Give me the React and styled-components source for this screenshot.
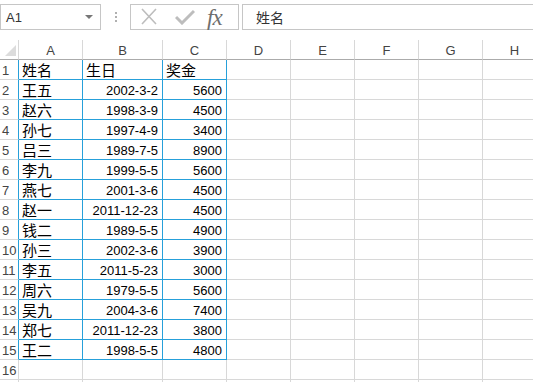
import React from 'react'
import styled, { createGlobalStyle } from 'styled-components'

const GlobalStyle = createGlobalStyle`
  html, body {
    margin: 0;
    padding: 0;
    background: #fff;
    overflow: hidden;
  }
  body {
    font-family: "Liberation Sans", Arial, sans-serif;
  }
`

const BLUE = '#26a0da'
const GRID = '#d8d8d8'

const columns = ['A', 'B', 'C', 'D', 'E', 'F', 'G', 'H']
const widths = [64, 80, 64, 64, 64, 64, 64, 64]

const data = [
  ['姓名', '生日', '奖金'],
  ['王五', '2002-3-2', '5600'],
  ['赵六', '1998-3-9', '4500'],
  ['孙七', '1997-4-9', '3400'],
  ['吕三', '1989-7-5', '8900'],
  ['李九', '1999-5-5', '5600'],
  ['燕七', '2001-3-6', '4500'],
  ['赵一', '2011-12-23', '4500'],
  ['钱二', '1989-5-5', '4900'],
  ['孙三', '2002-3-6', '3900'],
  ['李五', '2011-5-23', '3000'],
  ['周六', '1979-5-5', '5600'],
  ['吴九', '2004-3-6', '7400'],
  ['郑七', '2011-12-23', '3800'],
  ['王二', '1998-5-5', '4800'],
  ['', '', ''],
  ['', '', ''],
]

const Page = styled.div`
  width: 533px;
  height: 382px;
  overflow: hidden;
`

const Toolbar = styled.div`
  display: flex;
  align-items: flex-start;
  height: 40px;
  padding-top: 4px;
  box-sizing: border-box;
`

const NameBox = styled.div`
  width: 101px;
  height: 26px;
  box-sizing: border-box;
  border: 1px solid #c6c6c6;
  display: flex;
  align-items: center;
  justify-content: space-between;
  padding: 0 7px 0 5px;
  font-size: 13px;
  color: #333;
`

const Caret = styled.span`
  width: 0;
  height: 0;
  border-left: 4px solid transparent;
  border-right: 4px solid transparent;
  border-top: 4px solid #777;
`

const Dots = styled.div`
  width: 29px;
  height: 26px;
  display: flex;
  flex-direction: column;
  align-items: center;
  justify-content: center;
  gap: 2px;
  span {
    width: 2px;
    height: 2px;
    background: #b0b0b0;
  }
`

const FxGroup = styled.div`
  width: 109px;
  height: 26px;
  box-sizing: border-box;
  border: 1px solid #c6c6c6;
  display: flex;
  align-items: center;
  padding-left: 9px;
  gap: 17px;
`

const FxText = styled.span`
  font-family: "Liberation Serif", "Times New Roman", serif;
  font-style: italic;
  font-size: 23px;
  color: #6e6e6e;
  margin-left: -5px;
  line-height: 1;
  letter-spacing: -1px;
`

const FormulaInput = styled.div`
  flex: 1;
  margin-left: 3px;
  height: 26px;
  box-sizing: border-box;
  border: 1px solid #c6c6c6;
  border-right: none;
  display: flex;
  align-items: center;
  padding-left: 13px;
  font-family: "Noto Sans CJK SC", sans-serif;
  font-size: 14px;
  color: #333;
`

const Grid = styled.div`
  display: grid;
  grid-template-columns: 19px ${widths.map(w => w + 'px').join(' ')};
  grid-auto-rows: 20px;
  width: max-content;
`

const Corner = styled.div`
  position: relative;
  border-right: 1px solid ${GRID};
  border-bottom: 1px solid #ababab;
  &::after {
    content: '';
    position: absolute;
    right: 2px;
    bottom: 3px;
    width: 0;
    height: 0;
    border-left: 11px solid transparent;
    border-bottom: 11px solid #dcdcdc;
  }
`

const ColHead = styled.div`
  border-right: 1px solid ${GRID};
  border-bottom: 1px solid #ababab;
  display: flex;
  align-items: center;
  justify-content: center;
  font-size: 13px;
  color: #444;
  padding-top: 1px;
`

const RowHead = styled.div`
  border-right: 1px solid ${p => (p.$table ? BLUE : GRID)};
  border-bottom: 1px solid ${GRID};
  font-size: 13px;
  color: #444;
  padding-left: 2px;
  display: flex;
  align-items: center;
  padding-top: 1px;
`

const Cell = styled.div`
  border-right: 1px solid ${p => (p.$table ? BLUE : GRID)};
  border-bottom: 1px solid ${p => (p.$table ? BLUE : GRID)};
  display: flex;
  align-items: center;
  justify-content: ${p => (p.$num ? 'flex-end' : 'flex-start')};
  padding: 0 4px 0 3px;
  font-family: ${p => (p.$num ? '"Liberation Sans", Arial, sans-serif' : '"Noto Sans CJK SC", sans-serif')};
  font-size: ${p => (p.$num ? '13px' : '15px')};
  color: #000;
  white-space: nowrap;
  overflow: hidden;
  padding-top: ${p => (p.$num ? '2px' : '0')};
`

const EmptyCell = styled.div`
  border-right: 1px solid ${GRID};
  border-bottom: 1px solid ${GRID};
`

export default function App() {
  return (
    <Page>
      <GlobalStyle />
      <Toolbar>
        <NameBox>
          A1
          <Caret />
        </NameBox>
        <Dots>
          <span />
          <span />
          <span />
        </Dots>
        <FxGroup>
          <svg width="18" height="18" viewBox="0 0 18 18">
            <path d="M2 1 L16 16 M16 1 L2 16" stroke="#bdbdbd" strokeWidth="1.6" fill="none" />
          </svg>
          <svg width="20" height="16" viewBox="0 0 20 16">
            <path d="M1 8 L7 14 L19 2" stroke="#bdbdbd" strokeWidth="3" fill="none" />
          </svg>
          <FxText>fx</FxText>
        </FxGroup>
        <FormulaInput>姓名</FormulaInput>
      </Toolbar>
      <Grid>
        <Corner />
        {columns.map(c => (
          <ColHead key={c}>{c}</ColHead>
        ))}
        {data.map((row, r) => {
          const inTable = r < 15
          return (
            <React.Fragment key={r}>
              <RowHead $table={inTable}>{r < 16 ? r + 1 : ''}</RowHead>
              {row.map((v, c) => {
                const isNum = r > 0 && c > 0
                return (
                  <Cell key={c} $table={inTable} $num={isNum}>
                    {v}
                  </Cell>
                )
              })}
              {columns.slice(3).map(c => (
                <EmptyCell key={c} />
              ))}
            </React.Fragment>
          )
        })}
      </Grid>
    </Page>
  )
}
